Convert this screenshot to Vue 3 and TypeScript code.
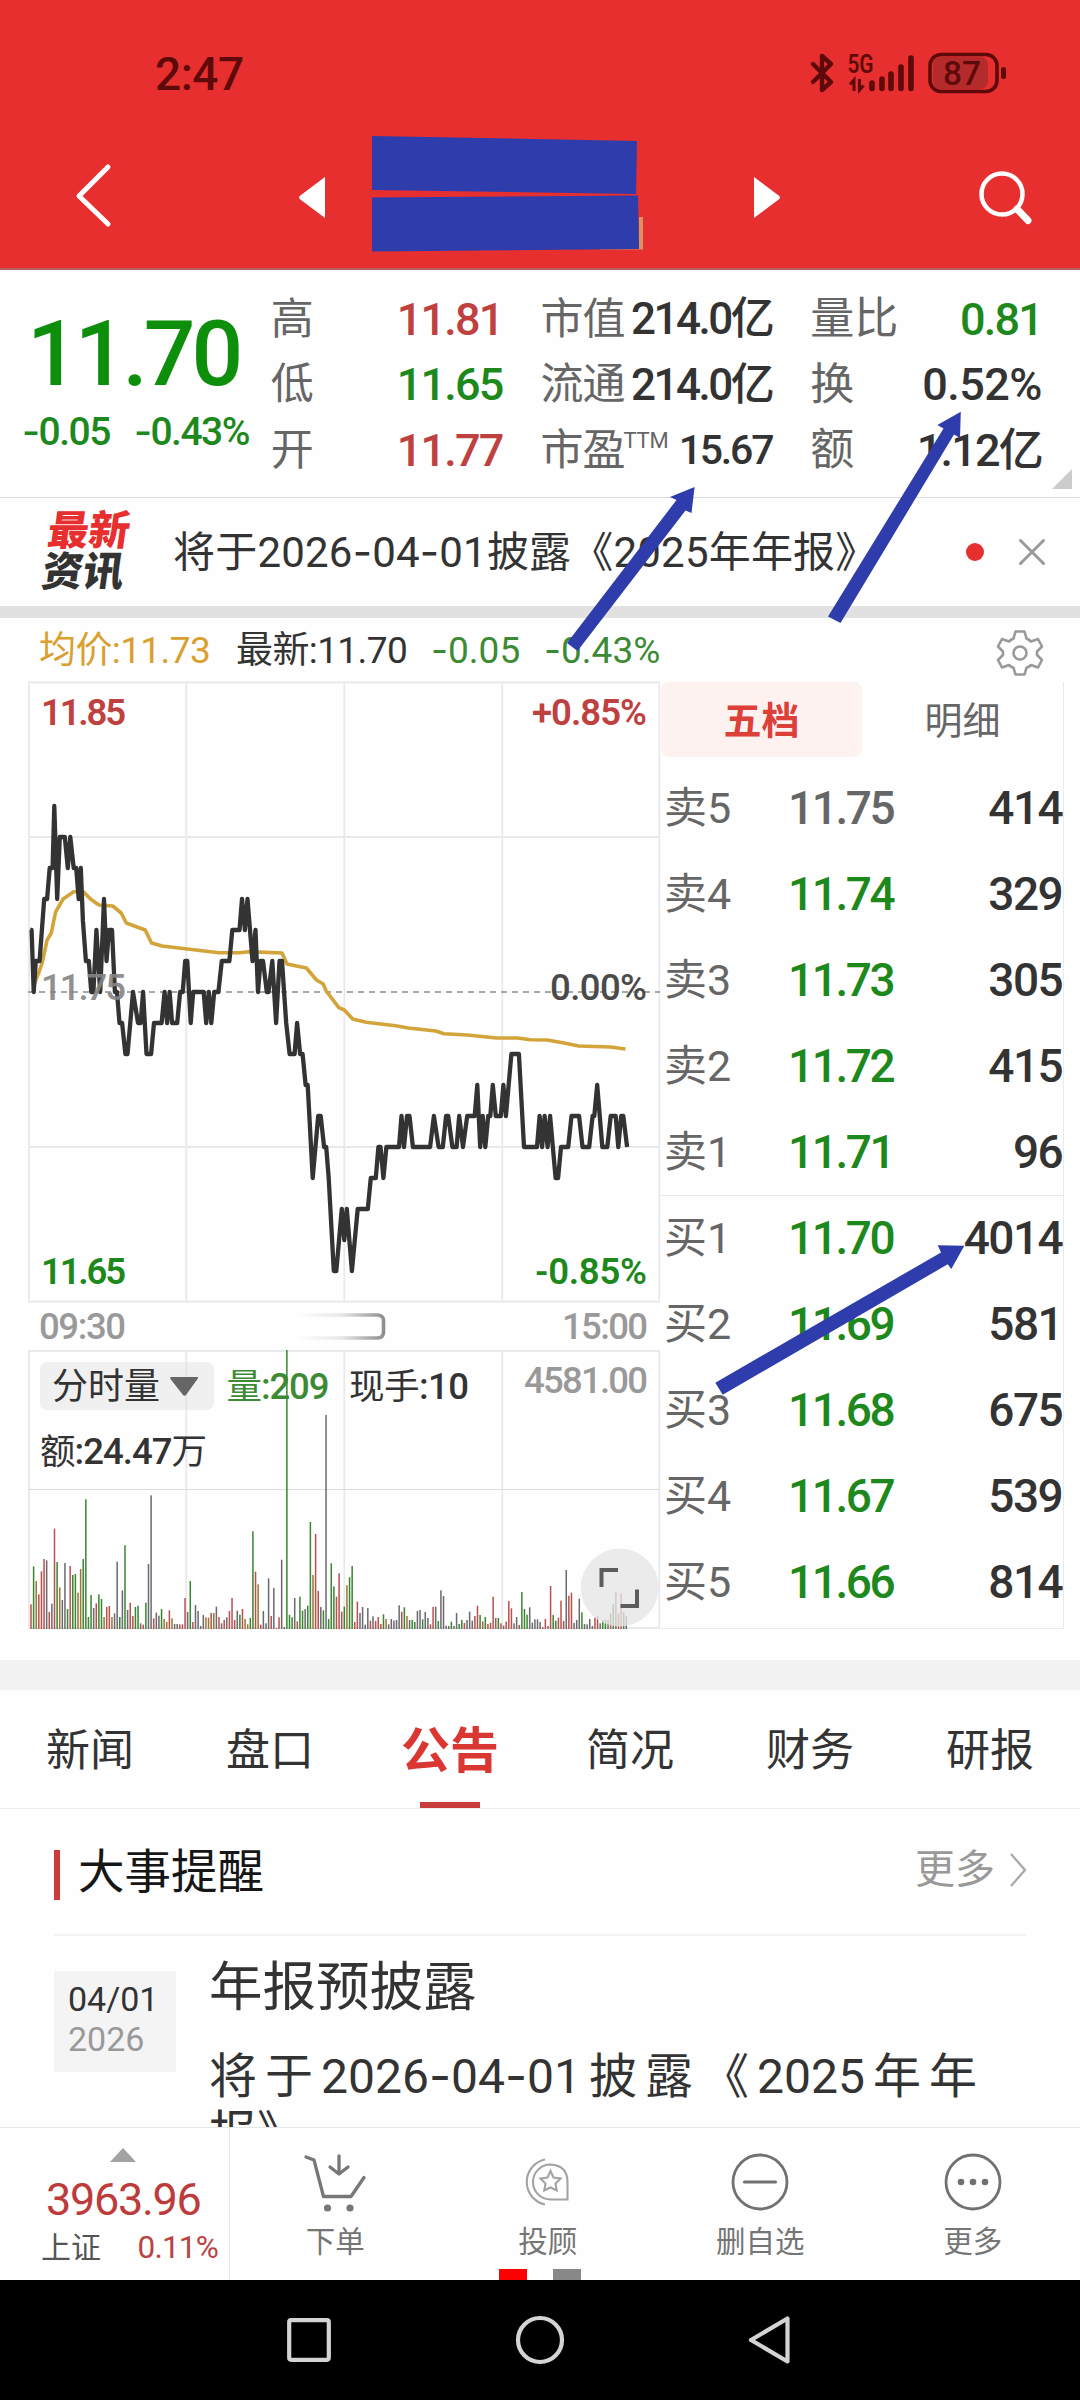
<script setup lang="ts">
import { h } from 'vue'
import type { FunctionalComponent } from 'vue'

// Renders a string with its hyphens set in a wider dash style
const Txt: FunctionalComponent<{ t: string }> = (props) =>
  h('span', { class: 'txt' }, props.t.split(/(-)/).filter(Boolean).map((p) => (p === '-' ? h('span', { class: 'dash' }, '-') : p)))
Txt.props = ['t']

interface Stat { label: string; sup?: string; value: string; tone: string }
const stats: Stat[][] = [
  [
    { label: '高', value: '11.81', tone: 'red' },
    { label: '低', value: '11.65', tone: 'green' },
    { label: '开', value: '11.77', tone: 'red' },
  ],
  [
    { label: '市值', value: '214.0亿', tone: 'dark tight' },
    { label: '流通', value: '214.0亿', tone: 'dark tight' },
    { label: '市盈', sup: 'TTM', value: '15.67', tone: 'dark small' },
  ],
  [
    { label: '量比', value: '0.81', tone: 'green' },
    { label: '换', value: '0.52%', tone: 'dark loose' },
    { label: '额', value: '1.12亿', tone: 'dark' },
  ],
]

const sells = [
  ['卖5', '11.75', '414'], ['卖4', '11.74', '329'], ['卖3', '11.73', '305'], ['卖2', '11.72', '415'], ['卖1', '11.71', '96'],
]
const buys = [
  ['买1', '11.70', '4014'], ['买2', '11.69', '581'], ['买3', '11.68', '675'], ['买4', '11.67', '539'], ['买5', '11.66', '814'],
]
const tabs = ['新闻', '盘口', '公告', '简况', '财务', '研报']

// Price series: [time position, ticks away from the 11.75 reference]
const priceTicks: number[] = [
  72, 2, 75, 2, 80, 0, 85, 1, 94, 1, 105, 3, 112, 3, 118, 4, 125, 4, 129, 6, 136, 3, 142, 5, 154, 5, 161, 4, 167, 5, 175, 4, 181, 4, 187, 3,
  192, 4, 197, 2.3, 204, 1, 211, 1, 217, 0, 222, 0, 229, 2, 238, 0, 247, 3, 253, 1, 259, 2, 266, 2, 273, 0, 278, 0, 284, -1, 290, -1,
  298, -2, 303, -2, 316, 0, 328, -1, 334, -1, 340, 0, 348, -2, 359, -2, 366, -1, 384, -1, 391, 0, 397, -1, 403, 0, 409, -1, 421, -1,
  428, 0, 434, 0, 440, 1, 445, 1, 453, -1, 459, 0, 484, 0, 490, -1, 496, 0, 502, -1, 509, 0, 519, 0, 527, 1, 545, 1, 552, 2, 569, 2, 575, 3,
  582, 2, 588, 3, 600, 1, 607, 2, 613, 0, 619, 1, 625, 1, 634, 0, 638, 0, 647, 1, 656, -1, 664, 1, 670, 1, 680, -1, 688, -2, 700, -2,
  706, -1, 713, -2, 719, -2, 726, -3, 731, -3, 743, -6, 756, -4, 762, -4, 770, -5, 775, -5, 781, -6, 793, -9, 799, -9, 812, -7,
  818, -8, 824, -7, 836, -9, 850, -7, 874, -7, 881, -6, 893, -6, 899, -5, 904, -5, 911, -6, 918, -5, 948, -5, 954, -4, 960, -5,
  967, -4, 973, -4, 981, -5, 1022, -5, 1031, -4, 1042, -5, 1052, -5, 1060, -4, 1065, -4, 1075, -5, 1085, -5, 1091, -4, 1100, -5,
  1110, -4, 1128, -4, 1134, -3, 1141, -5, 1147, -4, 1153, -5, 1160, -4, 1165, -4, 1171, -3, 1178, -4, 1190, -4, 1196, -3, 1202, -4,
  1215, -2, 1233, -2, 1245, -5, 1276, -5, 1282, -4, 1288, -5, 1294, -4, 1301, -5, 1307, -4, 1320, -6, 1326, -6, 1333, -5, 1350, -5,
  1358, -4, 1376, -4, 1384, -5, 1400, -5, 1408, -4, 1412, -4, 1419, -3, 1431, -5, 1443, -5, 1451, -4, 1463, -4, 1469, -5, 1476, -4,
  1481, -4, 1490, -5,
]
const avgTicks: number[] = [
  80, 985, 92, 973, 100, 963, 112, 940, 122, 933, 132, 912, 150, 899, 175, 891.7, 198, 891.7, 215, 899, 235, 905, 268, 906, 288, 913,
  300, 923, 345, 930, 360, 943, 385, 946, 445, 949, 520, 952.7, 570, 952.7, 590, 951.7, 670, 953, 682, 964, 728, 968, 752, 980,
  768, 984, 775, 991, 805, 1007.7, 818, 1010, 838, 1019, 870, 1022.3, 940, 1025.7, 970, 1028, 1035, 1031, 1055, 1033.7, 1110, 1035,
  1180, 1038, 1230, 1038, 1260, 1039.7, 1300, 1040, 1340, 1043, 1375, 1046, 1450, 1047, 1486, 1049,
]
const toPoints = (a: number[], fy: (v: number) => number): string => {
  const out: string[] = []
  for (let i = 0; i < a.length; i += 2) out.push(`${(a[i] / 2.376).toFixed(1)},${fy(a[i + 1]).toFixed(1)}`)
  return out.join(' ')
}
const pricePoints = toPoints(priceTicks, (v) => 992 - v * 31)
const avgPoints = toPoints(avgTicks, (v) => v)

// Volume per minute: colour key followed by the bar's height
const volumes =
  'r74 g188 o144 r104 r173 r210 d206 r51 d76 r301 g201 o125 d87 d198 g60 r189 g162 g165 o109 o180 g210 g389 g36 g102 d63 r77 g104 g90 o36 r66 r69 o36 d47 d202 g36 d116 g251 d57 r79 r39 g66 g70 d17 r13 g79 d195 d401 r32 d49 d40 g60 o30 o21 r56 o32 d15 d15 r14 r14 r93 d51 g144 r21 d72 d54 d9 d42 o35 o34 r48 o48 d67 r36 d17 r27 d35 r54 r93 r27 d55 g43 r60 o30 o14 g33 g293 r172 o134 r13 d54 d17 d152 r39 d123 r3 r35 d208 d6 g837 g42 g35 d93 r23 g97 g55 d60 g70 g321 o162 r285 r114 d66 g56 d642 g30 g197 g128 r97 r167 r52 g67 o131 g155 g189 r21 r82 d48 d66 d13 d63 r25 d38 r24 r36 r15 g44 o30 d14 d30 d25 d27 d71 r52 g65 o39 d27 g27 g21 d54 d57 g29 d51 d33 r14 r66 d67 g24 d116 d99 d10 d9 g22 d9 d48 g15 g27 r18 d27 d52 d25 r39 r70 g42 r23 g36 r15 r19 r97 r33 g33 r17 d10 r22 r84 r62 d17 d36 r12 g111 g60 g43 d65 d19 d29 d29 d21 r6 r30 r9 r129 g42 g25 r34 r85 r24 d177 r100 r109 d18 d27 d91 g50 d15 d14 d30 d9 r34 r39 d17 g27 g26 d27 r47 g75 d112 r47 r108 g51 d39'.split(' ')
const barColor: Record<string, string> = { r: '#b8504d', g: '#38862f', o: '#9b7535', d: '#6b6970' }
const step = (626.3 - 31) / (volumes.length - 1)
const bars = volumes.map((v, i) => ({ x: 31 + i * step, h: Number(v.slice(1)) / 3, c: barColor[v[0]] }))
const gridX = [29, 186.3, 344.3, 502.3, 659.3]
</script>

<template>
  <div class="screen">
    <header class="top">
      <div class="status">
        <span class="clock">2:47</span>
        <svg class="sys" width="204" height="48" viewBox="806 49 204 48">
          <path d="M813 64 L831 82 L822 90 V56 L831 64 L813 82" fill="none" stroke="#5e0a0a" stroke-width="4.4" stroke-linejoin="round" stroke-linecap="round" />
          <text x="847.5" y="73" font-size="25" font-weight="600" textLength="26" lengthAdjust="spacingAndGlyphs" fill="#5e0a0a">5G</text>
          <path d="M854 91 V80 L850 84.500 M859.500 79 V90 L863.500 85.500" fill="none" stroke="#5e0a0a" stroke-width="3" />
          <path d="M872 83 V88.500 M882 79 V88.500 M891 74 V88.500 M901 67 V88.500 M911 58 V88.500" stroke="#5e0a0a" stroke-width="5.6" stroke-linecap="round" />
          <rect x="933" y="57" width="55" height="32" rx="8" fill="#b52a2a" />
          <rect x="930" y="54.500" width="67" height="37" rx="11" fill="none" stroke="#5e0a0a" stroke-width="3.600" />
          <text x="943" y="85" font-size="34" font-weight="500" textLength="38" lengthAdjust="spacingAndGlyphs" fill="#5e0a0a">87</text>
          <rect x="1001" y="67" width="5" height="12" rx="2.500" fill="#5e0a0a" />
        </svg>
      </div>
      <div class="nav">
        <svg class="back" width="44" height="70" viewBox="72 161 44 70"><path d="M108 167 L79 196 L108 224" fill="none" stroke="#fff" stroke-width="5" stroke-linecap="round" stroke-linejoin="round" /></svg>
        <svg class="mid" width="490" height="124" viewBox="294 131 490 124">
          <path d="M325 177 V218 L301 200 Q297 197.500 301 195 Z M754 177 V218 L778 200 Q782 197.500 778 195 Z" fill="#fff" />
          <path d="M639 217 H643 V249.500 H600 V247 H639 Z" fill="#dc9160" />
          <path d="M372 136 L637 141 L636 194 L372 190 Z M372 197.500 L638 195.500 L639 249 L372 251.500 Z" fill="#2e3dab" />
        </svg>
        <svg class="search" width="60" height="60" viewBox="975 167 60 60">
          <circle cx="1002" cy="194" r="20.500" fill="none" stroke="#fff" stroke-width="4.500" />
          <path d="M1017 209 L1028 220.500" stroke="#fff" stroke-width="7" stroke-linecap="round" />
        </svg>
      </div>
    </header>

    <section class="quote">
      <div class="last">
        <div class="price">11.70</div>
        <div class="change"><Txt t="-0.05" /><Txt t="-0.43%" /></div>
      </div>
      <div v-for="(col, i) in stats" :key="i" class="stat-col">
        <div v-for="s in col" :key="s.label" class="stat">
          <span class="label" :class="{ wide: i === 2 }">{{ s.label }}<sup v-if="s.sup">{{ s.sup }}</sup></span>
          <span class="value" :class="s.tone">{{ s.value }}</span>
        </div>
      </div>
      <i class="fold"></i>
    </section>

    <section class="news">
      <div class="badge"><b>最新</b><b>资讯</b></div>
      <div class="headline"><Txt t="将于2026-04-01披露《2025年年报》" /></div>
      <i class="dot"></i>
      <svg class="close" width="30" height="30" viewBox="0 0 30 30"><path d="M3.500 3.500 L26.500 26.500 M26.500 3.500 L3.500 26.500" stroke="#999" stroke-width="3" stroke-linecap="round" /></svg>
    </section>

    <section class="market">
      <div class="legend">
        <span class="avg">均价:11.73</span>
        <span class="cur">最新:11.70</span>
        <span class="down d1"><Txt t="-0.05" /></span>
        <span class="down d2"><Txt t="-0.43%" /></span>
        <svg class="gear" width="50" height="50" viewBox="-25 -25 50 50">
          <path d="M-4.500 -21.500 H4.500 L6.500 -14.500 Q9 -13.500 11 -11.500 L18 -14 L22 -6.500 L17 -1.500 V2 L22 7 L18 14.500 L11 12 Q9 14 6.500 14.800 L4.500 21.500 H-4.500 L-6.500 14.800 Q-9 14 -11 12 L-18 14.500 L-22 7 L-17 2 V-1.500 L-22 -6.500 L-18 -14 L-11 -11.500 Q-9 -13.500 -6.500 -14.500 Z" fill="none" stroke="#999" stroke-width="2.600" stroke-linejoin="round" />
          <circle r="6.500" fill="none" stroke="#999" stroke-width="2.600" />
        </svg>
      </div>
      <div class="board">
        <svg class="chart" width="633" height="952" viewBox="28 680 633 952">
          <defs>
            <linearGradient id="fade" x1="295" x2="386" y1="0" y2="0" gradientUnits="userSpaceOnUse">
              <stop offset="0" stop-color="#888" stop-opacity="0" />
              <stop offset="0.5" stop-color="#888" stop-opacity="0.18" />
              <stop offset="0.95" stop-color="#888" stop-opacity="0.9" />
              <stop offset="1" stop-color="#888" />
            </linearGradient>
          </defs>
          <g stroke="#e9e9eb" stroke-width="1.800">
            <path v-for="x in gridX" :key="x" :d="`M${x} 682.500 V1301.500 M${x} 1351 V1628`" />
            <path d="M28 682.500 H660 M28 837 H660 M28 1147 H660 M28 1301.500 H660 M28 1351 H660 M28 1628 H660" />
            <path d="M28 1489.500 H660" stroke="#dcdcdc" stroke-width="1.200" />
          </g>
          <path d="M28 992 H660" stroke="#8a8a8a" stroke-width="1.500" stroke-dasharray="6 5" />
          <polyline :points="avgPoints" fill="none" stroke="#d3a43a" stroke-width="3.600" stroke-linejoin="round" />
          <polyline :points="pricePoints" fill="none" stroke="#333" stroke-width="4.300" stroke-linejoin="round" />
          <g font-size="36.500" font-weight="600">
            <text x="41" y="725" textLength="85" fill="#be403f">11.85</text>
            <text x="532" y="725" textLength="115" fill="#be403f">+0.85%</text>
            <text x="41" y="1000" textLength="85" fill="#858585" opacity="0.9" font-weight="500">11.75</text>
            <text x="550" y="1000" textLength="97" fill="#4a4a4a" font-weight="500">0.00%</text>
            <text x="41" y="1284" textLength="85" fill="#1d881b">11.65</text>
            <text x="535" y="1284" textLength="112" fill="#1d881b">-0.85%</text>
          </g>
          <g font-size="36.500" font-weight="500" fill="#999">
            <text x="39" y="1339" textLength="87">09:30</text>
            <text x="562" y="1339" textLength="86">15:00</text>
            <text x="524" y="1393" textLength="124">4581.00</text>
          </g>
          <path d="M295 1315 H377 Q383.500 1315 383.500 1321 V1332 Q383.500 1338 377 1338 H295" fill="none" stroke="url(#fade)" stroke-width="3.600" />
          <rect x="40" y="1362" width="174" height="48" rx="7" fill="#f0f0f0" />
          <path d="M186.300 1362 V1410" stroke="#e4e4e6" stroke-width="1.800" />
          <text x="52" y="1399" font-size="36" textLength="108" fill="#333">分时量</text>
          <path d="M171 1377 H197 Q199 1377 197.500 1379 L186 1395 Q184.500 1396.500 183 1395 L170.500 1379 Q169.500 1377 171 1377 Z" fill="#666" />
          <g font-size="36.500" font-weight="500">
            <text x="226.500" y="1399" textLength="103" fill="#3d8a35"><tspan font-weight="400" font-size="35.500">量</tspan>:209</text>
            <text x="349" y="1399" textLength="120" fill="#333"><tspan font-weight="400" font-size="35.500">现手</tspan>:10</text>
            <text x="40" y="1464" textLength="167" fill="#333"><tspan font-weight="400" font-size="35.500">额</tspan>:24.47<tspan font-weight="400" font-size="35.500">万</tspan></text>
          </g>
          <rect v-for="(b, i) in bars" :key="i" :x="b.x - 0.75" :y="1629 - b.h" width="1.500" :height="b.h" :fill="b.c" />
          <circle cx="619.700" cy="1587.500" r="39" fill="#e6e6e6" fill-opacity="0.78" />
          <path d="M618 1570 H601.500 V1587 M620.500 1606 H637 V1589.500" fill="none" stroke="#5c5c5c" stroke-width="4" />
        </svg>
        <div class="book">
          <div class="book-tabs"><b>五档</b><span>明细</span></div>
          <div v-for="r in sells" :key="r[0]" class="level">
            <span class="side">{{ r[0] }}</span>
            <span class="at" :class="{ flat: r[0] === '卖5' }">{{ r[1] }}</span>
            <span class="lots">{{ r[2] }}</span>
          </div>
          <div class="sep"></div>
          <div v-for="r in buys" :key="r[0]" class="level">
            <span class="side">{{ r[0] }}</span>
            <span class="at">{{ r[1] }}</span>
            <span class="lots">{{ r[2] }}</span>
          </div>
        </div>
      </div>
    </section>

    <nav class="tabs">
      <span v-for="t in tabs" :key="t" :class="{ on: t === '公告' }">{{ t }}</span>
    </nav>

    <section class="events">
      <div class="events-head">
        <i></i>
        <h2>大事提醒</h2>
        <span class="more">更多</span>
        <svg width="20" height="38" viewBox="0 0 20 38"><path d="M2 3 L16 19 L2 35" fill="none" stroke="#aaa" stroke-width="2.400" /></svg>
      </div>
      <div class="event">
        <div class="date"><span>04/01</span><span class="year">2026</span></div>
        <div class="body">
          <h3>年报预披露</h3>
          <p><Txt t="将于2026-04-01披露《2025年年报》" /></p>
        </div>
      </div>
    </section>

    <footer class="dock">
      <div class="index">
        <i class="up"></i>
        <div class="points">3963.96</div>
        <div class="index-row"><span>上证</span><em>0.11%</em></div>
      </div>
      <div class="act">
        <svg width="70" height="64" viewBox="301 2150 70 64" fill="none" stroke="#777" stroke-width="3.300" stroke-linecap="round" stroke-linejoin="round">
          <path d="M307 2157 L315 2160 L324.500 2196.500 H352 L365 2177.500 M340 2156 V2173 M331 2167 L340 2174 L349 2167" />
          <g fill="#777" stroke="none"><circle cx="328.500" cy="2208" r="3.600" /><circle cx="351" cy="2208" r="3.600" /></g>
        </svg>
        <span>下单</span>
      </div>
      <div class="act">
        <svg width="70" height="64" viewBox="513.500 2150 70 64" fill="none" stroke="#a3a3a3" stroke-width="2.100">
          <path d="M551 2164.500 Q568 2165.500 568 2182 V2199.500 H551 A17.500 17.500 0 0 1 551 2164.500 Z" />
          <path d="M545.500 2159.500 A23 23 0 0 0 545.500 2204.500" />
          <path d="M551 2171 L554 2177.500 L561 2178.500 L556 2183.500 L557.200 2190.500 L551 2187.500 L544.800 2190.500 L546 2183.500 L541 2178.500 L548 2177.500 Z" />
        </svg>
        <span>投顾</span>
        <i class="pg"></i><i class="pg grey"></i>
      </div>
      <div class="act">
        <svg width="70" height="64" viewBox="-35 -32 70 64" fill="none" stroke="#717171" stroke-width="2.800" stroke-linecap="round">
          <circle r="27" /><path d="M-15.500 0 H15.500" stroke-width="3.200" />
        </svg>
        <span>删自选</span>
      </div>
      <div class="act">
        <svg width="70" height="64" viewBox="-35 -32 70 64" fill="none" stroke="#717171" stroke-width="2.800">
          <circle r="27" />
          <g fill="#717171" stroke="none"><circle cx="-12" r="3.300" /><circle r="3.300" /><circle cx="12" r="3.300" /></g>
        </svg>
        <span>更多</span>
      </div>
    </footer>

    <div class="sysnav">
      <svg width="56" height="56" viewBox="-28 -28 56 56"><rect x="-19.800" y="-19.800" width="39.600" height="39.600" rx="2" /></svg>
      <svg width="56" height="56" viewBox="-28 -28 56 56"><circle r="22" /></svg>
      <svg width="56" height="56" viewBox="-26 -28 56 56"><path d="M18.500 -21.500 V21.500 L-18 0 Z" /></svg>
    </div>

    <svg class="arrows" width="1080" height="2400" viewBox="0 0 1080 2400">
      <path d="M694.600 487 L691.500 513 L685.500 510.500 L577.500 651 L567 643 L676.500 500 L670 497 Z" />
      <path d="M960.800 411.700 L960 438 L954 434.500 L840.500 623 L828 616.500 L943.500 428.500 L937.400 425 Z" />
      <path d="M964.300 1245.700 L951.300 1269 L947.700 1264.300 L722.700 1394.700 L715.300 1382.700 L941 1252.500 L937.700 1245.300 Z" />
    </svg>
  </div>
</template>

<style>
body { margin: 0; background: #fff; }
.txt .dash { font-family: Inter, sans-serif; font-weight: inherit; }
</style>

<style scoped>
.screen { position: relative; width: 1080px; height: 2400px; overflow: hidden; display: flex; flex-direction: column; background: #fefefe; color: #333; font-family: Roboto, "Noto Sans CJK SC", sans-serif; line-height: 1; white-space: nowrap; }
.screen > * { flex: none; }
svg { display: block; flex: none; }
i, em { font-style: normal; }

.top { height: 270px; border-bottom: 2px solid #b8605c; background: #e62f2e; box-sizing: border-box; }
.status { height: 98px; padding: 49px 70px 0 155px; box-sizing: border-box; display: flex; justify-content: space-between; }
.clock { font-size: 46px; line-height: 50px; font-weight: 500; letter-spacing: -0.500px; color: #5e0a0a; }
.nav { height: 170px; display: flex; align-items: flex-start; }
.back { margin: 63px 0 0 72px; }
.mid { margin: 33px 0 0 178px; }
.search { margin: 69px 0 0 191px; }

.quote { position: relative; height: 227px; border-bottom: 1px solid #dcdcdc; display: flex; }
.last { width: 271px; color: #0d8f0c; }
.price { margin-top: 37px; padding-left: 27px; font-size: 91px; line-height: 94px; font-weight: 500; letter-spacing: -4px; }
.change { display: flex; gap: 24px; padding-left: 22px; font-size: 39px; line-height: 60px; font-weight: 500; color: #1d881b; letter-spacing: -1.500px; }
.stat-col { width: 232px; margin-right: 38px; padding-top: 16.500px; }
.stat { display: flex; justify-content: space-between; align-items: center; height: 65.500px; }
.label { font-size: 43px; color: #666; letter-spacing: -1px; display: flex; }
.label.wide { font-size: 44px; letter-spacing: 0; }
.label sup { font-size: 22px; line-height: 22px; margin: 1px 0 0 -1px; letter-spacing: -0.200px; vertical-align: top; }
.value { font-size: 45px; font-weight: 500; letter-spacing: -1.800px; }
.value.red { color: #be403f; }
.value.green { color: #1d881b; }
.value.tight { letter-spacing: -2.500px; font-size: 44px; }
.value.small { font-size: 41px; letter-spacing: -2.200px; }
.value.loose { letter-spacing: -0.500px; }
.fold { position: absolute; right: 8px; bottom: 8px; border-left: 20px solid transparent; border-bottom: 20px solid #ccc; }

.news { height: 108px; border-bottom: 12px solid #e1e1e1; display: flex; align-items: center; }
.badge { width: 127px; padding-left: 45px; transform: skewX(-8deg); display: flex; flex-direction: column; }
.badge b { font-size: 41px; line-height: 41px; font-weight: 900; color: #333; }
.badge b:first-child { color: #e62f2e; }
.headline { width: 786px; padding-left: 1px; box-sizing: border-box; font-size: 42px; line-height: 60px; letter-spacing: 0.200px; margin-top: 1px; }
.dot { width: 18px; height: 18px; border-radius: 50%; background: #e62f2e; margin-left: 8px; }
.close { margin-left: 33px; }

.market { height: 1042px; border-bottom: 30px solid #f2f2f2; }
.legend { height: 62px; display: flex; align-items: center; padding-left: 39px; font-size: 37px; }
.legend > span { line-height: 62px; margin-top: 3px; }
.avg { color: #d9a02f; width: 197px; letter-spacing: -0.600px; }
.cur { width: 195px; letter-spacing: -0.600px; }
.down { color: #3c8a34; }
.d1 { width: 113px; }
.d2 { width: 120px; }
.gear { margin: 7px 0 0 331px; }
.board { display: flex; padding-left: 28px; height: 952px; }
.book { width: 402px; margin-top: 2px; border-right: 1.500px solid #eaeaea; border-bottom: 1.500px solid #eaeaea; height: 946px; }
.book-tabs { display: flex; height: 75px; margin-bottom: 8px; font-size: 38px; line-height: 79px; text-align: center; color: #666; }
.book-tabs b { width: 201px; background: #fef2f1; color: #dc4039; border-radius: 8px; }
.book-tabs span { width: 201px; }
.level { display: flex; align-items: center; height: 86px; font-size: 46px; font-weight: 500; letter-spacing: -2.400px; }
.side { width: 127px; padding-left: 3px; box-sizing: border-box; font-size: 43px; font-weight: 400; color: #666; letter-spacing: 0; }
.at { width: 140px; color: #1d881b; }
.at.flat { color: #666; }
.lots { flex: 1; text-align: right; color: #333; padding-right: 1px; letter-spacing: -1.600px; }
.sep { position: relative; height: 1px; margin-bottom: -1px; background: #e9e9e9; }

.tabs { height: 118px; border-bottom: 1px solid #ebebeb; display: flex; }
.tabs span { position: relative; width: 180px; text-align: center; font-size: 44px; line-height: 122px; height: 118px; color: #333; }
.tabs .on { font-size: 49px; font-weight: 700; color: #da3733; line-height: 124px; }
.tabs .on::after { content: ""; position: absolute; left: 60px; bottom: 0; width: 60px; height: 6px; background: #c83d3b; }

.events { height: 318px; overflow: hidden; }
.events-head { height: 125px; margin: 0 54px; border-bottom: 2px solid #f3f3f3; display: flex; align-items: center; }
.events-head i { width: 6px; height: 50px; background: #cb3b39; margin-top: 6px; }
h2 { margin: 0 auto 0 18px; font-size: 46.500px; line-height: 60px; font-weight: 400; color: #161616; }
.more { font-size: 40px; line-height: 60px; color: #999; margin-top: -4px; }
.events-head svg { margin: -3px -3px 0 14px; }
.event { display: flex; margin-left: 54px; }
.date { width: 108px; height: 90px; padding: 8px 0 3px 14px; margin-top: 35px; background: #f4f4f4; font-size: 34px; line-height: 40px; display: flex; flex-direction: column; }
.date .year { color: #999; font-size: 34px; }
.body { margin-left: 33px; width: 768px; }
h3 { margin: 19px 0 0; font-size: 53.500px; line-height: 66px; font-weight: 400; color: #333; }
.body p { margin: 26px 0 0; font-size: 48px; line-height: 57px; white-space: normal; text-align: justify; }

.dock { height: 152px; border-top: 1px solid #e6e6e6; display: flex; }
.index { width: 229px; border-right: 1px solid #e8e8e8; display: flex; flex-direction: column; }
.up { margin: 20px 0 0 110px; width: 0; border: 13px solid transparent; border-top: 0; border-bottom: 14px solid #a2a2a2; }
.points { margin: 13px 0 0 46px; font-size: 45px; line-height: 50px; letter-spacing: -1.300px; color: #bd3c3b; }
.index-row { display: flex; justify-content: space-between; align-items: center; padding: 0 11px 0 41px; line-height: 46px; margin-top: 0; font-size: 30px; color: #555; }
.index-row em { font-size: 31.500px; letter-spacing: -0.800px; color: #b94342; }
.act { position: relative; flex: 1; right: 1px; display: flex; flex-direction: column; align-items: center; font-size: 29.500px; color: #757575; }
.act svg { margin-top: 22px; }
.act span { margin-top: 7px; line-height: 42px; }
.pg { position: absolute; left: 57px; bottom: 0; width: 28px; height: 11px; background: #f00; }
.pg.grey { left: 111px; background: #888; }

.sysnav { height: 120px; background: #000; display: flex; justify-content: center; align-items: center; gap: 175px; }
.sysnav svg { fill: none; stroke: #d4d4d4; stroke-width: 4.200; stroke-linejoin: round; }
.arrows { position: absolute; left: 0; top: 0; pointer-events: none; fill: #2e3dab; }
</style>
